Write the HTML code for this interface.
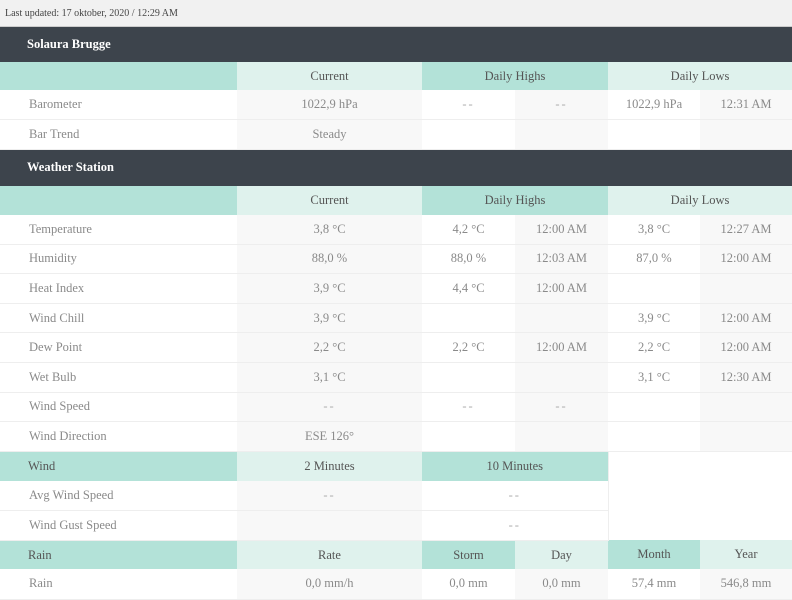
<!DOCTYPE html>
<html><head><meta charset="utf-8"><style>
*{margin:0;padding:0;box-sizing:border-box}
body{width:792px;height:597px;overflow:hidden;background:#fff;font-family:"Liberation Serif",serif;font-size:12.5px;color:#8a8a8a}
.top{height:27px;background:#f1f1f1;border-bottom:1px solid #ccc;font-size:10px;color:#444;padding:8px 0 0 5px}
.dark{height:35px;background:#3d444c;color:#fff;font-weight:bold;font-size:12.5px;padding:10px 0 0 27px}
table{border-collapse:collapse;table-layout:fixed;width:792px}
td{text-align:center;border-bottom:1px solid #eee;white-space:nowrap;height:29.5px;padding:0}
.t2 td{height:29.6px}
td.l{text-align:left;padding-left:29px}
.h td{color:#555;border-bottom:none;height:28px}
.t2 .h td{height:29px}
.t2 .h.w td{height:30px}
.h td.l{padding-left:28px}
.D{background:#b3e2d8}.L{background:#dff2ed}.g{background:#f8f8f8}
.dd{color:#aaa;letter-spacing:2px}
</style></head><body>
<div class="top">Last updated: 17 oktober, 2020 / 12:29 AM</div>
<div class="dark">Solaura Brugge</div>
<table>
<colgroup><col style="width:237px"><col style="width:185px"><col style="width:93px"><col style="width:93px"><col style="width:92px"><col style="width:92px"></colgroup>
<tr class="h"><td class="D"></td><td class="L">Current</td><td class="D" colspan="2">Daily Highs</td><td class="L" colspan="2">Daily Lows</td></tr>
<tr><td class="l">Barometer</td><td class="g">1022,9 hPa</td><td class="dd">--</td><td class="g dd">--</td><td>1022,9 hPa</td><td class="g">12:31 AM</td></tr>
<tr><td class="l">Bar Trend</td><td class="g">Steady</td><td></td><td class="g"></td><td></td><td class="g"></td></tr>
</table>
<div class="dark" style="height:36px">Weather Station</div>
<table class="t2">
<colgroup><col style="width:237px"><col style="width:185px"><col style="width:93px"><col style="width:93px"><col style="width:92px"><col style="width:92px"></colgroup>
<tr class="h"><td class="D"></td><td class="L">Current</td><td class="D" colspan="2">Daily Highs</td><td class="L" colspan="2">Daily Lows</td></tr>
<tr><td class="l">Temperature</td><td class="g">3,8 °C</td><td>4,2 °C</td><td class="g">12:00 AM</td><td>3,8 °C</td><td class="g">12:27 AM</td></tr>
<tr><td class="l">Humidity</td><td class="g">88,0 %</td><td>88,0 %</td><td class="g">12:03 AM</td><td>87,0 %</td><td class="g">12:00 AM</td></tr>
<tr><td class="l">Heat Index</td><td class="g">3,9 °C</td><td>4,4 °C</td><td class="g">12:00 AM</td><td></td><td class="g"></td></tr>
<tr><td class="l">Wind Chill</td><td class="g">3,9 °C</td><td></td><td class="g"></td><td>3,9 °C</td><td class="g">12:00 AM</td></tr>
<tr><td class="l">Dew Point</td><td class="g">2,2 °C</td><td>2,2 °C</td><td class="g">12:00 AM</td><td>2,2 °C</td><td class="g">12:00 AM</td></tr>
<tr><td class="l">Wet Bulb</td><td class="g">3,1 °C</td><td></td><td class="g"></td><td>3,1 °C</td><td class="g">12:30 AM</td></tr>
<tr><td class="l">Wind Speed</td><td class="g dd">--</td><td class="dd">--</td><td class="g dd">--</td><td></td><td class="g"></td></tr>
<tr><td class="l">Wind Direction</td><td class="g">ESE 126°</td><td></td><td class="g"></td><td></td><td class="g"></td></tr>
<tr class="h w"><td class="D l">Wind</td><td class="L">2 Minutes</td><td class="D" colspan="2">10 Minutes</td><td colspan="2" rowspan="3" style="border-left:1px solid #eee;border-bottom:none;background:#fff"></td></tr>
<tr><td class="l">Avg Wind Speed</td><td class="g dd">--</td><td colspan="2" class="dd">--</td></tr>
<tr><td class="l">Wind Gust Speed</td><td class="g"></td><td colspan="2" class="dd">--</td></tr>
<tr class="h"><td class="D l">Rain</td><td class="L">Rate</td><td class="D">Storm</td><td class="L">Day</td><td class="D">Month</td><td class="L">Year</td></tr>
<tr><td class="l">Rain</td><td class="g">0,0 mm/h</td><td>0,0 mm</td><td class="g">0,0 mm</td><td>57,4 mm</td><td class="g">546,8 mm</td></tr>
</table>
</body></html>
